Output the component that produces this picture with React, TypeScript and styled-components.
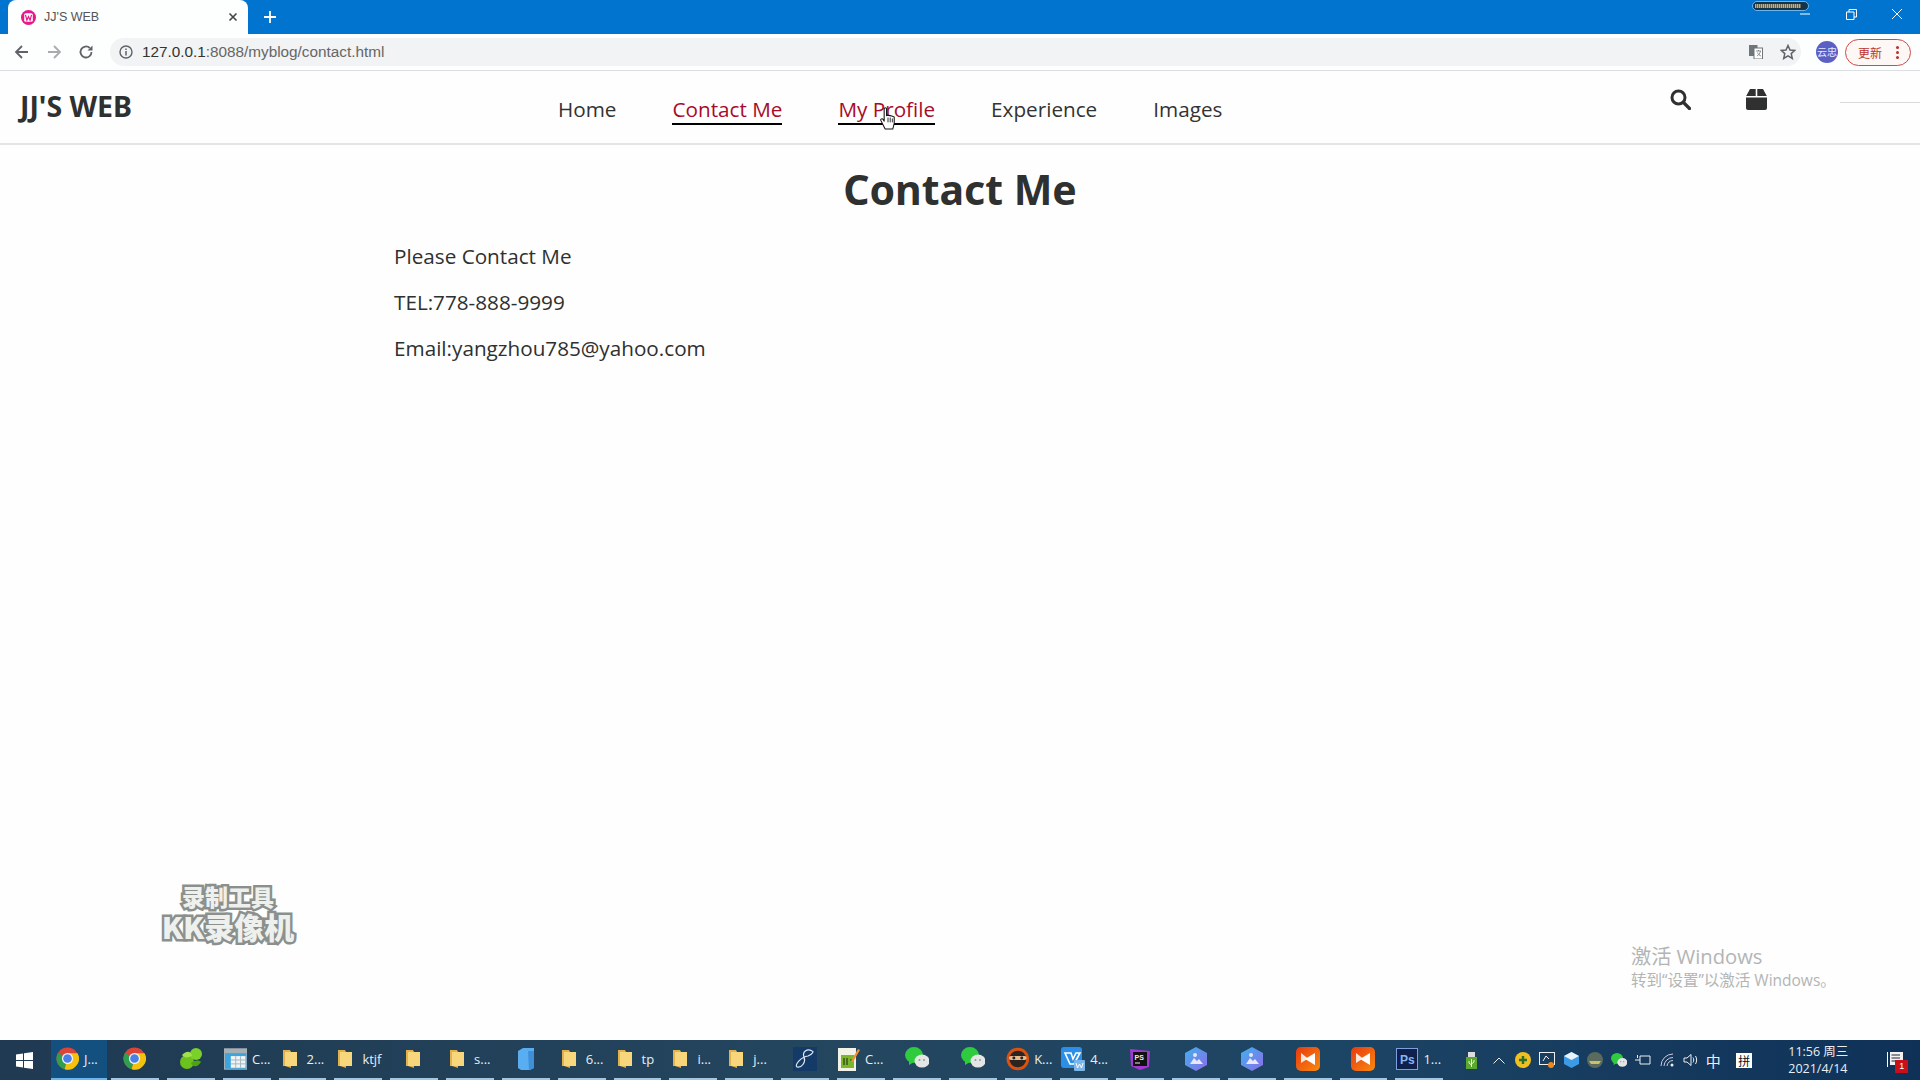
import React from 'react';
import styled, { createGlobalStyle } from 'styled-components';

const Global = createGlobalStyle`
  html, body { margin: 0; padding: 0; height: 100%; background: #fdfefd; }
  body { font-family: "Open Sans", "Noto Sans CJK SC", sans-serif; overflow: hidden; }
  #root { height: 100%; }
`;

const Page = styled.div`
  position: relative;
  width: 1920px;
  height: 1080px;
  display: flex;
  flex-direction: column;
  overflow: hidden;
`;

/* ---------- browser chrome ---------- */
const TabStrip = styled.div`
  position: relative;
  height: 34px;
  flex: none;
  background: #0074cf;
  display: flex;
  align-items: flex-end;
  padding-left: 8px;
`;
const Tab = styled.div`
  width: 240px;
  height: 34px;
  box-sizing: border-box;
  background: #fdfefe;
  border-radius: 8px 8px 0 0;
  display: flex;
  align-items: center;
  padding: 0 10px 0 13px;
  font: 12.5px "Liberation Sans", sans-serif;
  color: #555;
`;
const TabTitle = styled.span`
  margin-left: 8px;
  flex: 1;
`;
const NewTab = styled.div`
  width: 20px;
  height: 34px;
  margin-left: 12px;
  display: flex;
  align-items: center;
  justify-content: center;
  color: #fff;
`;
const Recorder = styled.div`
  position: absolute;
  left: 1752px;
  top: 1px;
  width: 57px;
  height: 10px;
  box-sizing: border-box;
  border: 1px solid #6fb5ea;
  border-radius: 5px;
  background: #12324e;
  padding: 2px 7px 2px 2px;
`;
const RecorderFill = styled.div`
  height: 100%;
  background: repeating-linear-gradient(90deg, #e0a84e 0 1px, #6a6a55 1px 2px);
`;
const WinControls = styled.div`
  position: absolute;
  right: 0;
  top: 0;
  height: 28px;
  display: flex;
`;
const WinButton = styled.div`
  width: 46px;
  height: 28px;
  display: flex;
  align-items: center;
  justify-content: center;
  color: #fff;
`;

const Toolbar = styled.div`
  height: 36px;
  flex: none;
  background: #fdfefe;
  border-bottom: 1px solid #dcdfe1;
  display: flex;
  align-items: center;
  padding-left: 14px;
  padding-right: 9px;
`;
const NavIcon = styled.div<{ $w: number }>`
  width: ${p => p.$w}px;
  display: flex;
  align-items: center;
  color: #5f6368;
`;
const Omnibox = styled.div`
  margin-left: 10px;
  width: 1692px;
  height: 28px;
  box-sizing: border-box;
  border-radius: 14px;
  background: #f1f3f4;
  display: flex;
  align-items: center;
  padding: 0 5px 0 9px;
  font: 15.3px/1 "Liberation Sans", sans-serif;
  color: #666;
`;
const Host = styled.span`
  color: #333;
`;
const Url = styled.span`
  margin-left: 9px;
  flex: 1;
`;
const OmniRight = styled.div`
  display: flex;
  align-items: center;
  gap: 17px;
  color: #5f6368;
`;
const Avatar = styled.div`
  width: 22px;
  height: 22px;
  margin-left: 15px;
  border-radius: 50%;
  background: #5b60c4;
  color: #e8e8ff;
  font: 10px/22px "Noto Sans CJK SC", sans-serif;
  text-align: center;
  flex: none;
`;
const UpdateButton = styled.div`
  margin-left: 7px;
  width: 66px;
  height: 27px;
  box-sizing: border-box;
  border: 1px solid #cf4a45;
  border-radius: 14px;
  background: #fdf7f6;
  color: #b9332e;
  font: 12px "Noto Sans CJK SC", sans-serif;
  display: flex;
  align-items: center;
  justify-content: space-between;
  padding: 0 11px 0 12px;
  flex: none;
`;
const Kebab = styled.span`
  width: 3px;
  height: 3px;
  border-radius: 50%;
  background: #b9332e;
  box-shadow: 0 -5px 0 #b9332e, 0 5px 0 #b9332e;
`;

/* ---------- site ---------- */
const Header = styled.header`
  position: relative;
  height: 74px;
  flex: none;
  box-sizing: border-box;
  border-bottom: 2px solid #e3e5e5;
  display: grid;
  grid-template-columns: 538px 1fr auto;
  align-items: center;
  padding: 0 153px 0 20px;
  color: #2f3030;
`;
const Logo = styled.div`
  font-family: "Noto Sans", sans-serif;
  font-size: 28.5px;
  font-weight: 700;
  margin-top: -2px;
`;
const Menu = styled.nav`
  display: flex;
  gap: 56px;
  margin-top: 3px;
`;
const MenuLink = styled.a<{ $on?: boolean }>`
  position: relative;
  font-size: 20.7px;
  line-height: 28px;
  padding-top: 3px;
  color: ${p => (p.$on ? '#a90a2a' : '#333')};
  border-bottom: 2px solid ${p => (p.$on ? '#000' : 'transparent')};
`;
const Cursor = styled.svg`
  position: absolute;
  left: 42px;
  top: 15px;
`;
const HeaderIcons = styled.div`
  display: flex;
  gap: 55px;
  align-items: center;
  margin-top: -16px;
`;
const EdgeLine = styled.div`
  position: absolute;
  right: 0;
  top: 31px;
  width: 80px;
  height: 1px;
  background: #d9dbdb;
`;
const Main = styled.main`
  flex: 1;
  padding-top: 14px;
  color: #2f3030;
`;
const Title = styled.h1`
  margin: 0 0 22px;
  text-align: center;
  font-family: "Noto Sans", sans-serif;
  font-size: 41px;
  line-height: 60px;
  font-weight: 700;
`;
const Paragraph = styled.p`
  margin: 0 0 16px 394px;
  font-size: 20.7px;
  line-height: 30px;
`;
const Watermark = styled.div`
  position: absolute;
  left: 150px;
  top: 882px;
  width: 156px;
  text-align: center;
  white-space: nowrap;
  font: 900 30px/30px "Noto Sans CJK SC", sans-serif;
  color: #eef0ee;
  -webkit-text-stroke: 5px #8b908d;
  paint-order: stroke fill;
`;
const WatermarkTop = styled.div`
  font-size: 23px;
  line-height: 29px;
`;
const Activate = styled.div`
  position: absolute;
  left: 1631px;
  top: 942px;
  color: #b3b5b5;
  font-family: "Open Sans", "Noto Sans CJK SC", sans-serif;
`;
const ActivateMain = styled.div`
  font-size: 20.2px;
  line-height: 28px;
`;
const ActivateSub = styled.div`
  font-size: 15.5px;
  line-height: 20px;
`;

/* ---------- taskbar ---------- */
const Taskbar = styled.div`
  height: 40px;
  flex: none;
  background: linear-gradient(90deg, #1f3a52 0%, #24465f 45%, #1c4464 70%, #0f3158 100%);
  display: flex;
  align-items: stretch;
  color: #e9eef2;
  font: 13px "Open Sans", "Noto Sans CJK SC", sans-serif;
`;
const StartButton = styled.div`
  width: 51px;
  flex: none;
  display: flex;
  align-items: center;
  justify-content: center;
  padding-right: 2px;
  box-sizing: border-box;
`;
const TaskItem = styled.div<{ $active?: boolean }>`
  width: ${p => (p.$active ? 56 : 47.85)}px;
  margin-right: ${p => (p.$active ? 4 : 8)}px;
  flex: none;
  box-sizing: border-box;
  display: flex;
  align-items: center;
  gap: 5px;
  padding-left: ${p => (p.$active ? 5 : 1)}px;
  padding-bottom: 1px;
  border-bottom: 2px solid ${p => (p.$active ? '#6cb5ee' : '#a4c6e0')};
  background: ${p => (p.$active ? '#14507f' : 'transparent')};
  white-space: nowrap;
`;
const TaskCenter = styled(TaskItem)`
  justify-content: center;
  padding-left: 0;
`;
const Tray = styled.div`
  flex: 1;
  display: flex;
  align-items: center;
  padding-left: 8px;
`;
const TrayIcon = styled.div<{ $push?: number; $w?: number }>`
  width: ${p => p.$w ?? 24}px;
  margin-left: ${p => p.$push ?? 0}px;
  flex: none;
  display: flex;
  align-items: center;
  justify-content: center;
`;
const ImeText = styled.div`
  width: 24px;
  flex: none;
  text-align: center;
  font: 15px "Noto Sans CJK SC", sans-serif;
`;
const ImeBox = styled.div`
  width: 16px;
  height: 15px;
  margin-left: 11px;
  flex: none;
  background: #fff;
  color: #111;
  text-align: center;
  font: 12px/15px "Noto Sans CJK SC", sans-serif;
`;
const Clock = styled.div`
  width: 66px;
  margin-left: 36px;
  flex: none;
  font: 12.5px/17px "Open Sans", "Noto Sans CJK SC", sans-serif;
  white-space: nowrap;
`;
const Notify = styled.div`
  position: relative;
  margin-left: 33px;
  width: 16px;
  height: 16px;
  flex: none;
  color: #fff;
`;
const NotifyBadge = styled.span`
  position: absolute;
  left: 8px;
  top: 8px;
  width: 13px;
  height: 13px;
  background: #c8101a;
  color: #fff;
  font: 9px/13px "Liberation Sans", sans-serif;
  text-align: center;
`;
const FolderSvg = styled.svg`
  margin: 0 5px 0 3px;
  flex: none;
`;

/* ---------- drawn icons ---------- */
const Chrome = () => (
  <svg width="23" height="23" viewBox="0 0 24 24">
    <circle cx="12" cy="12" r="11.5" fill="#db4437" />
    <path d="M12 12 L2.2 6 A11.5 11.5 0 0 0 9 23.1Z" fill="#2f9e4f" />
    <path d="M12 6.5H22.5A11.5 11.5 0 0 1 9 23.1L12 12Z" fill="#f4c20d" />
    <circle cx="12" cy="12" r="5.8" fill="#f4f4f4" />
    <circle cx="12" cy="12" r="4.5" fill="#4a80e8" />
  </svg>
);
const Folder = () => (
  <FolderSvg width="14" height="20" viewBox="0 0 14 20">
    <path d="M0 1H7L8 3V19L2 17H0Z" fill="#e2b24f" />
    <path d="M2 3H14V17H2Z" fill="#f8d77c" />
  </FolderSvg>
);
const Leaf = () => (
  <svg width="24" height="22" viewBox="0 0 24 22">
    <ellipse cx="8" cy="14" rx="7" ry="7" fill="#6cc21c" />
    <ellipse cx="17" cy="6" rx="6" ry="6" fill="#7ad12a" />
    <path d="M3 7C8 2 12 3 13 8C9 10 5 10 3 7Z" fill="#a4e04a" />
    <path d="M12 15C16 12 20 12 22 14C19 19 14 20 12 15Z" fill="#4fa50f" />
  </svg>
);
const Sheet = () => (
  <svg width="24" height="22" viewBox="0 0 24 22">
    <rect width="24" height="22" fill="#a8b0b6" />
    <rect x="1" y="5" width="22" height="16" fill="#3ca5dc" />
    <rect x="7" y="8" width="15" height="12" fill="#f3f3f3" />
    <path d="M7 12H22M7 16H22M12 8V20M17 8V20" stroke="#9fb6c4" strokeWidth="1" />
  </svg>
);
const Cube = () => (
  <svg width="16" height="22" viewBox="0 0 16 22">
    <path d="M0 3L5 0H16V20L12 22H3L0 20Z" fill="#58aef0" />
    <path d="M10 3H16V20L11 22Z" fill="#3f90d8" />
  </svg>
);
const Eight = () => (
  <svg width="24" height="24" viewBox="0 0 24 24">
    <rect width="24" height="24" fill="#143a68" />
    <path d="M19 4C14 1 9 5 11 10C13 15 9 21 4 20C1 18 8 10 15 9C20 7 21 4 19 4Z" fill="none" stroke="#dfe8f4" strokeWidth="1.2" />
  </svg>
);
const Notes = () => (
  <svg width="22" height="24" viewBox="0 0 22 24">
    <rect y="1" width="18" height="23" fill="#f2f2e6" />
    <rect x="3" y="8" width="13" height="13" fill="#7cb62c" />
    <path d="M6 11V18M9 11V18M12 13H15" stroke="#26400b" strokeWidth="1.2" />
    <path d="M13 14L20 2L22 3L15 15Z" fill="#f09030" />
  </svg>
);
const WeChat = ({ size = 24 }: { size?: number }) => (
  <svg width={size} height={size * 0.92} viewBox="0 0 24 22">
    <ellipse cx="9" cy="8" rx="9" ry="8" fill="#2ecb3f" />
    <path d="M4 13L4 18L9 15Z" fill="#2ecb3f" />
    <ellipse cx="17" cy="14" rx="7.5" ry="6.5" fill="#e4e6e6" />
    <circle cx="14.5" cy="13" r="1" fill="#999" />
    <circle cx="19" cy="13" r="1" fill="#999" />
  </svg>
);
const Ninja = () => (
  <svg width="24" height="24" viewBox="0 0 24 24">
    <circle cx="12" cy="12" r="11.5" fill="#d9520f" />
    <circle cx="12" cy="12" r="8.5" fill="#2a2422" />
    <rect x="3" y="9" width="18" height="4" rx="2" fill="#e9b98e" />
    <circle cx="8" cy="11" r="1.5" fill="#222" />
    <circle cx="16" cy="11" r="1.5" fill="#222" />
  </svg>
);
const Vs = () => (
  <svg width="24" height="24" viewBox="0 0 24 24">
    <rect width="21" height="21" rx="3" fill="#2b8fe8" />
    <path d="M4 6H10L12 12L15 6H19L13 17H9Z" fill="none" stroke="#fff" strokeWidth="1.6" />
    <rect x="13" y="13" width="11" height="11" rx="1" fill="#7bb5ea" />
    <path d="M15 16L16.5 21L18.5 17L20.5 21L22 16" stroke="#fff" strokeWidth="1" fill="none" />
  </svg>
);
const PhpStorm = () => (
  <svg width="22" height="22" viewBox="0 0 22 22">
    <path d="M1 1L21 3L20 19L11 22L2 18Z" fill="#a33ad0" />
    <rect x="4" y="4" width="14" height="14" fill="#111" />
    <path d="M6 15H11" stroke="#eee" strokeWidth="1" />
    <text x="5.5" y="11.5" fontSize="7" fontWeight="700" fill="#eee" fontFamily="Liberation Sans">PS</text>
  </svg>
);
const Hex = () => (
  <svg width="22" height="24" viewBox="0 0 22 24">
    <defs>
      <linearGradient id="hexg" x1="0" y1="0" x2="1" y2="1">
        <stop offset="0" stopColor="#3fb2ee" />
        <stop offset="1" stopColor="#8d6be8" />
      </linearGradient>
    </defs>
    <path d="M11 0L22 6V18L11 24L0 18V6Z" fill="url(#hexg)" />
    <path d="M5 17L9 11L12 14L14 12L18 17Z" fill="#e9e6fb" />
    <circle cx="10" cy="8" r="2" fill="#e9e6fb" />
  </svg>
);
const Kingsoft = () => (
  <svg width="24" height="24" viewBox="0 0 24 24">
    <defs>
      <linearGradient id="kingg" x1="0" y1="0" x2="1" y2="1">
        <stop offset="0" stopColor="#e8390f" />
        <stop offset="1" stopColor="#f88a10" />
      </linearGradient>
    </defs>
    <rect width="24" height="24" rx="5" fill="url(#kingg)" />
    <path d="M5 6L12 11.5L5 16Z" fill="#f9e6dc" />
    <path d="M19 6L9 12L19 18Z" fill="#fff" />
  </svg>
);
const Photoshop = () => (
  <svg width="22" height="22" viewBox="0 0 22 22">
    <rect x="0.5" y="0.5" width="21" height="21" fill="#10204c" stroke="#7f9fe0" />
    <text x="4" y="15.5" fontSize="12" fontWeight="700" fill="#89b4f0" fontFamily="Liberation Sans">Ps</text>
  </svg>
);
const Usb = () => (
  <svg width="11" height="17" viewBox="0 0 11 17">
    <rect x="2" y="0" width="7" height="5" fill="#ddd" />
    <rect y="5" width="11" height="12" fill="#5aa82d" />
    <path d="M5.5 7V15M3 9V11L5.5 13M8 8V10L5.5 12" stroke="#e6f5d8" fill="none" />
  </svg>
);

type Item = { icon: React.ReactNode; label?: string };

const items: Item[] = [
  { icon: <Chrome /> },
  { icon: <Leaf /> },
  { icon: <Sheet />, label: 'C...' },
  { icon: <Folder />, label: '2...' },
  { icon: <Folder />, label: 'ktjf' },
  { icon: <Folder /> },
  { icon: <Folder />, label: 's...' },
  { icon: <Cube /> },
  { icon: <Folder />, label: '6...' },
  { icon: <Folder />, label: 'tp' },
  { icon: <Folder />, label: 'i...' },
  { icon: <Folder />, label: 'j...' },
  { icon: <Eight /> },
  { icon: <Notes />, label: 'C...' },
  { icon: <WeChat /> },
  { icon: <WeChat /> },
  { icon: <Ninja />, label: 'K...' },
  { icon: <Vs />, label: '4...' },
  { icon: <PhpStorm /> },
  { icon: <Hex /> },
  { icon: <Hex /> },
  { icon: <Kingsoft /> },
  { icon: <Kingsoft /> },
  { icon: <Photoshop />, label: '1...' },
];

export default function App() {
  return (
    <Page>
      <Global />
      <TabStrip>
        <Tab>
          <svg width="15" height="15" viewBox="0 0 14 14">
            <circle cx="7" cy="7" r="7" fill="#e8178a" />
            <rect x="3" y="3" width="8" height="8" rx="1.5" fill="#fff" />
            <path d="M4.2 4.5L5.5 9.5L7 6L8.5 9.5L9.8 4.5" stroke="#e8178a" strokeWidth="1.1" fill="none" />
          </svg>
          <TabTitle>JJ'S WEB</TabTitle>
          <svg width="10" height="10" viewBox="0 0 10 10">
            <path d="M1.5 1.5L8.5 8.5M8.5 1.5L1.5 8.5" stroke="#444" strokeWidth="1.6" />
          </svg>
        </Tab>
        <NewTab>
          <svg width="12" height="12" viewBox="0 0 12 12">
            <path d="M6 0V12M0 6H12" stroke="#fff" strokeWidth="1.8" />
          </svg>
        </NewTab>
        <Recorder><RecorderFill /></Recorder>
        <WinControls>
          <WinButton>
            <svg width="10" height="10" viewBox="0 0 10 10"><path d="M0 5H10" stroke="#fff" /></svg>
          </WinButton>
          <WinButton>
            <svg width="11" height="11" viewBox="0 0 11 11">
              <path d="M0.5 3H8V10.5H0.5ZM3 3V0.5H10.5V8H8" stroke="#fff" fill="none" />
            </svg>
          </WinButton>
          <WinButton>
            <svg width="12" height="12" viewBox="0 0 12 12">
              <path d="M1 1L11 11M11 1L1 11" stroke="#fff" strokeWidth="1" />
            </svg>
          </WinButton>
        </WinControls>
      </TabStrip>

      <Toolbar>
        <NavIcon $w={32}>
          <svg width="16" height="16" viewBox="0 0 16 16"><path d="M14 8H2.5M8 2L2 8L8 14" stroke="#5f6368" strokeWidth="1.8" fill="none" /></svg>
        </NavIcon>
        <NavIcon $w={32}>
          <svg width="16" height="16" viewBox="0 0 16 16"><path d="M2 8H13.5M8 2L14 8L8 14" stroke="#a9acaf" strokeWidth="1.8" fill="none" /></svg>
        </NavIcon>
        <NavIcon $w={22}>
          <svg width="16" height="16" viewBox="0 0 16 16">
            <path d="M13.5 8A5.5 5.5 0 1 1 11.8 4" stroke="#5f6368" strokeWidth="1.8" fill="none" />
            <path d="M14.5 1.5V6.5H9.5Z" fill="#5f6368" />
          </svg>
        </NavIcon>
        <Omnibox>
          <svg width="14" height="14" viewBox="0 0 14 14">
            <circle cx="7" cy="7" r="6" stroke="#5f6368" strokeWidth="1.4" fill="none" />
            <path d="M7 6V10.5M7 3.5V5" stroke="#5f6368" strokeWidth="1.5" />
          </svg>
          <Url><Host>127.0.0.1</Host>:8088/myblog/contact.html</Url>
          <OmniRight>
            <svg width="14" height="14" viewBox="0 0 14 14">
              <rect x="0" y="0" width="8.5" height="11" fill="#70757a" />
              <rect x="5" y="3" width="8.5" height="11" fill="#fff" stroke="#70757a" strokeWidth="1" />
              <path d="M7 6H12M9.5 5V6M8 11C10 10 11 8 11.5 6M8.5 7.5C9 9 10.5 10.5 12 11" stroke="#70757a" strokeWidth="0.8" fill="none" />
            </svg>
            <svg width="16" height="16" viewBox="0 0 16 16">
              <path d="M8 1.5L10 6L14.8 6.4L11.2 9.6L12.3 14.4L8 11.8L3.7 14.4L4.8 9.6L1.2 6.4L6 6Z" fill="none" stroke="#5f6368" strokeWidth="1.5" />
            </svg>
          </OmniRight>
        </Omnibox>
        <Avatar>云忠</Avatar>
        <UpdateButton>更新<Kebab /></UpdateButton>
      </Toolbar>

      <Header>
        <Logo>JJ'S WEB</Logo>
        <Menu>
          <MenuLink>Home</MenuLink>
          <MenuLink $on>Contact Me</MenuLink>
          <MenuLink $on>
            My Profile
            <Cursor width="16" height="23" viewBox="0 0 16 24">
              <path d="M4 2C4 0.5 6.5 0.5 6.5 2V9L8 8.5L10 9L12 9.5L14.5 10.5V17L13 23H5L0.5 14C0 12.5 2 11.5 3 13L4 15Z" fill="#fff" stroke="#111" strokeWidth="1.1" />
              <path d="M8 11V16M10.3 11V16M12.5 12V16" stroke="#111" strokeWidth="0.9" />
            </Cursor>
          </MenuLink>
          <MenuLink>Experience</MenuLink>
          <MenuLink>Images</MenuLink>
        </Menu>
        <HeaderIcons>
          <svg width="21" height="21" viewBox="0 0 21 21">
            <circle cx="8.5" cy="8.5" r="6.5" stroke="#2f3030" strokeWidth="3" fill="none" />
            <path d="M13.5 13.5L19.5 19.5" stroke="#2f3030" strokeWidth="3.2" strokeLinecap="round" />
          </svg>
          <svg width="21" height="21" viewBox="0 0 21 21">
            <path d="M4 0H9.7V7H0.2ZM11.3 0H17L20.8 7H11.3Z" fill="#2f3030" />
            <path d="M0 8.4H21V19A2 2 0 0 1 19 21H2A2 2 0 0 1 0 19Z" fill="#2f3030" />
          </svg>
        </HeaderIcons>
        <EdgeLine />
      </Header>

      <Main>
        <Title>Contact Me</Title>
        <Paragraph>Please Contact Me</Paragraph>
        <Paragraph>TEL:778-888-9999</Paragraph>
        <Paragraph>Email:yangzhou785@yahoo.com</Paragraph>
      </Main>

      <Watermark>
        <WatermarkTop>录制工具</WatermarkTop>
        KK录像机
      </Watermark>
      <Activate>
        <ActivateMain>激活 Windows</ActivateMain>
        <ActivateSub>转到“设置”以激活 Windows。</ActivateSub>
      </Activate>

      <Taskbar>
        <StartButton>
          <svg width="17" height="17" viewBox="0 0 17 17">
            <path d="M0 2.4L7 1.4V8H0ZM8 1.2L17 0V8H8ZM0 9H7V15.6L0 14.6ZM8 9H17V17L8 15.8Z" fill="#fff" />
          </svg>
        </StartButton>
        <TaskItem $active>
          <Chrome />
          J...
        </TaskItem>
        {items.map((it, i) =>
          it.label ? (
            <TaskItem key={i}>{it.icon}{it.label}</TaskItem>
          ) : (
            <TaskCenter key={i}>{it.icon}</TaskCenter>
          ),
        )}
        <Tray>
          <TrayIcon><Usb /></TrayIcon>
          <TrayIcon $push={4}>
            <svg width="12" height="7" viewBox="0 0 12 7"><path d="M0.5 6.5L6 1L11.5 6.5" stroke="#eee" fill="none" /></svg>
          </TrayIcon>
          <TrayIcon>
            <svg width="16" height="16" viewBox="0 0 16 16">
              <circle cx="8" cy="8" r="8" fill="#f0c020" />
              <path d="M8 4V12M4 8H12" stroke="#2a6e2a" strokeWidth="2.4" />
            </svg>
          </TrayIcon>
          <TrayIcon>
            <svg width="16" height="16" viewBox="0 0 16 16">
              <rect x="0.5" y="0.5" width="15" height="12" fill="none" stroke="#eee" />
              <path d="M4 9L7 4L10 7" stroke="#eee" fill="none" />
              <circle cx="12" cy="13" r="3" fill="#ee8a1a" />
            </svg>
          </TrayIcon>
          <TrayIcon>
            <svg width="15" height="16" viewBox="0 0 15 16">
              <path d="M7.5 0L15 4V12L7.5 16L0 12V4Z" fill="#3d9be6" />
              <path d="M7.5 0L15 4L7.5 8L0 4Z" fill="#eaf4fc" />
            </svg>
          </TrayIcon>
          <TrayIcon>
            <svg width="16" height="16" viewBox="0 0 16 16">
              <circle cx="8" cy="8" r="8" fill="#5a6a5e" />
              <path d="M2 9H14L12 12H4Z" fill="#c5c26a" />
            </svg>
          </TrayIcon>
          <TrayIcon><WeChat size={16} /></TrayIcon>
          <TrayIcon>
            <svg width="16" height="14" viewBox="0 0 16 14">
              <path d="M5 3H15V11H5ZM5 7H0M2.5 2V5" stroke="#eee" fill="none" />
            </svg>
          </TrayIcon>
          <TrayIcon>
            <svg width="14" height="14" viewBox="0 0 14 14">
              <path d="M1 13A12 12 0 0 1 13 1M4 13A9 9 0 0 1 13 4.5M7 13A6 6 0 0 1 13 7.5" stroke="#ccd" fill="none" />
              <circle cx="12" cy="12" r="1.5" fill="#eee" />
            </svg>
          </TrayIcon>
          <TrayIcon $w={22}>
            <svg width="15" height="14" viewBox="0 0 15 14">
              <path d="M1 5H4L8 1.5V12.5L4 9H1ZM10 4.5C11 6 11 8 10 9.5M12.5 3C14 5.5 14 8.5 12.5 11" stroke="#eee" fill="none" />
            </svg>
          </TrayIcon>
          <ImeText>中</ImeText>
          <ImeBox>拼</ImeBox>
          <Clock>11:56 周三<br />2021/4/14</Clock>
          <Notify>
            <svg width="16" height="15" viewBox="0 0 16 15">
              <path d="M0.5 0V15" stroke="#fff" />
              <rect x="3" y="0" width="13" height="13" fill="#f2f2f2" />
              <path d="M4.5 3H13M4.5 6H13M4.5 9H9" stroke="#223" />
            </svg>
            <NotifyBadge>1</NotifyBadge>
          </Notify>
        </Tray>
      </Taskbar>
    </Page>
  );
}
